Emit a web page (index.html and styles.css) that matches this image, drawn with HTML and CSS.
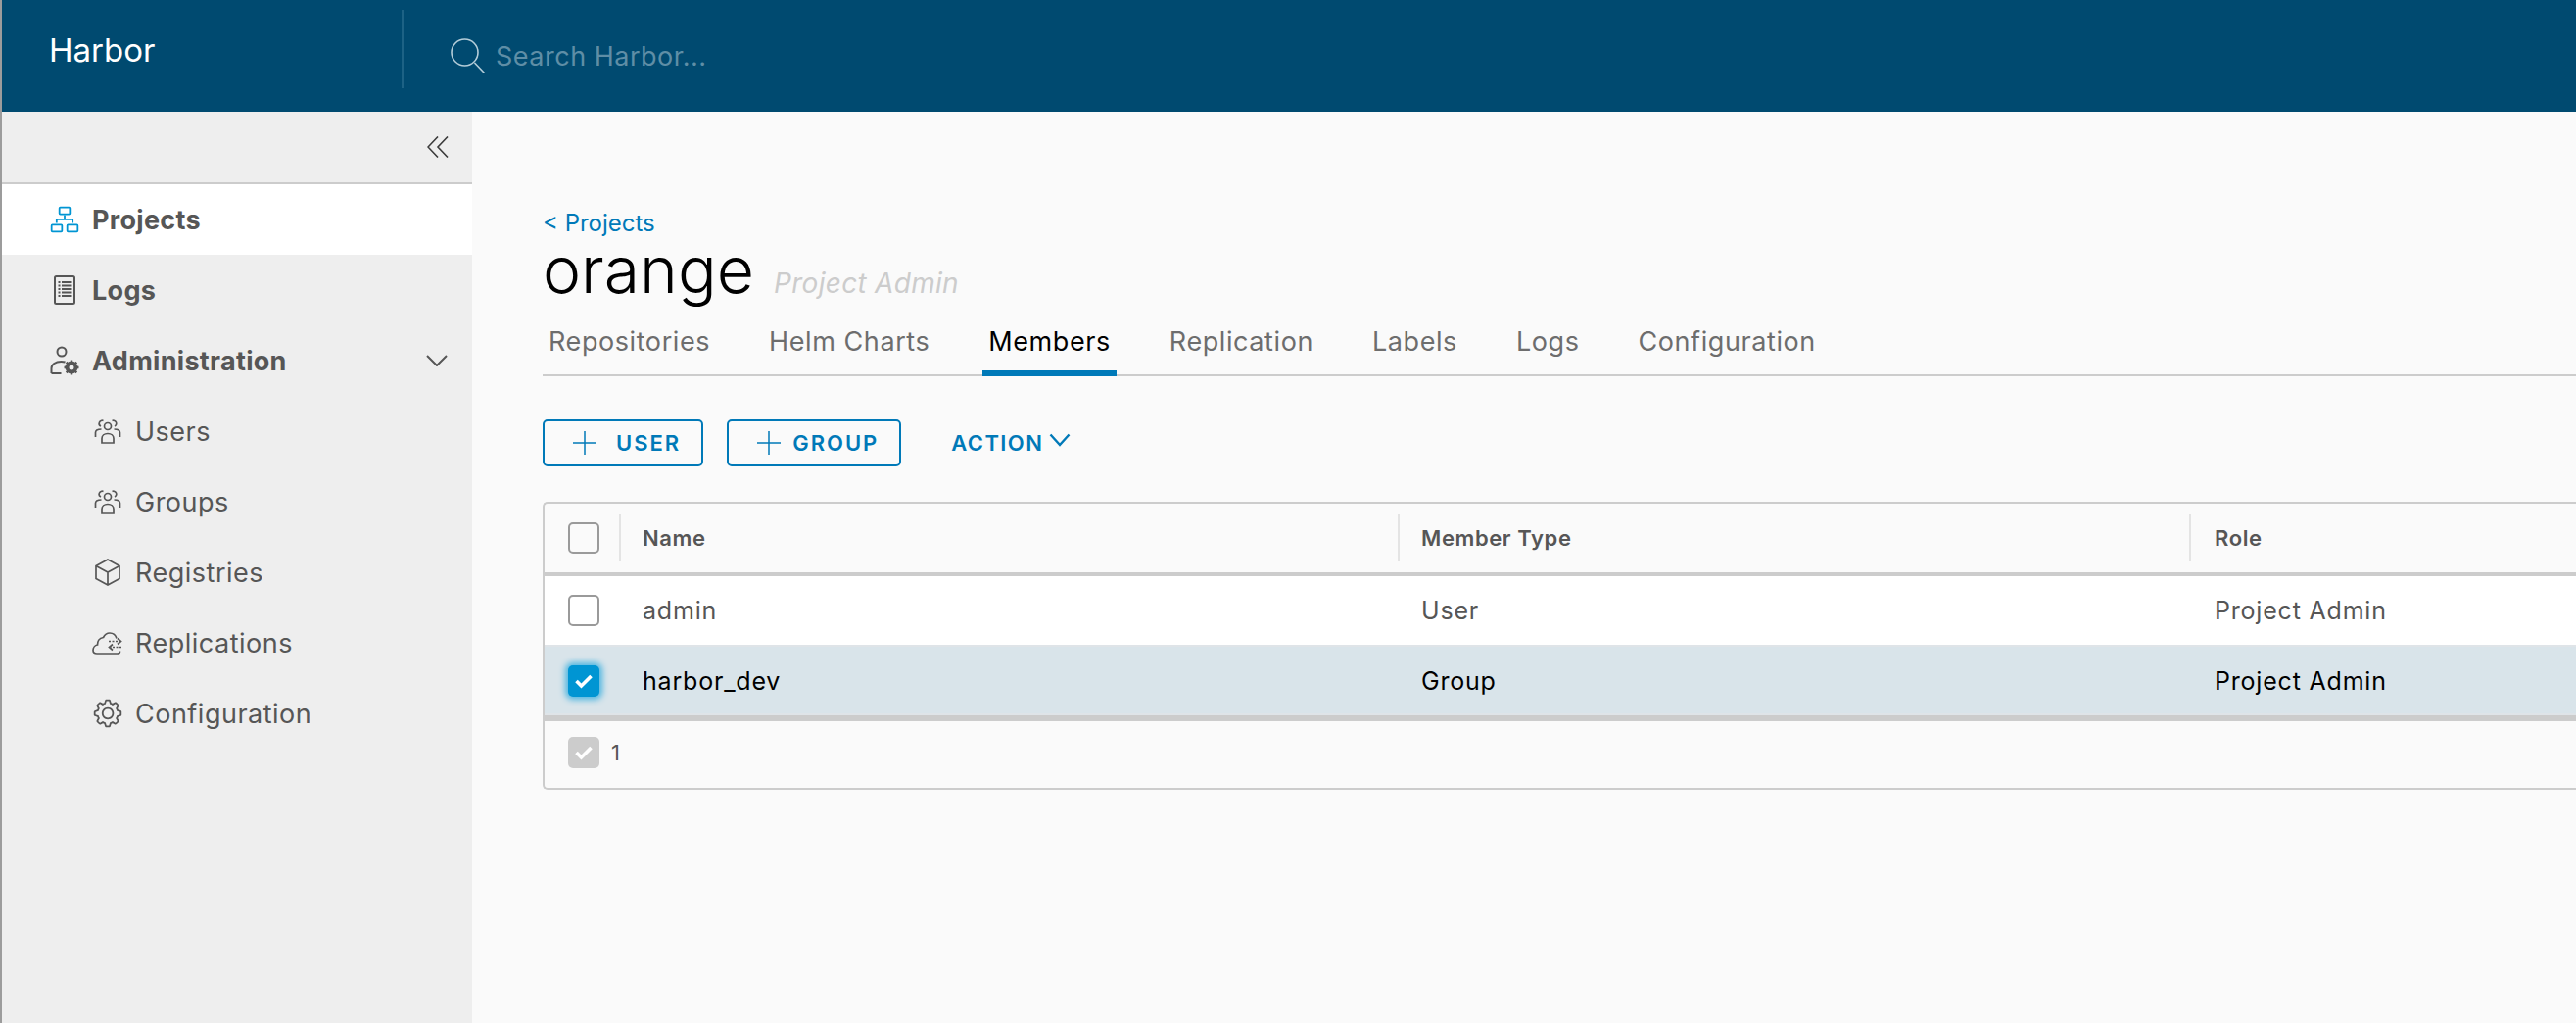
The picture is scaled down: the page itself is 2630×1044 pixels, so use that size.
FILE: index.html
```html
<!DOCTYPE html>
<html lang="en">
<head>
    <meta charset="UTF-8">
    <title>Harbor</title>
    <link rel="stylesheet" href="styles.css">
</head>
<body>
    <header class="topbar">
        <div class="brand">Harbor</div>
        <div class="search">
            <svg class="search-icon" viewBox="0 0 36 36"><circle cx="14.5" cy="14.5" r="13.5"/><path d="M24.500 25l10.500 11"/></svg>
            <span>Search Harbor...</span>
        </div>
    </header>

    <div class="layout">
        <nav class="sidebar">
            <div class="collapse-row">
                <svg class="chev-double" viewBox="0 0 22 22"><path d="M11 .5L1 11l10 10.500M21 .5L11 11l10 10.500"/></svg>
            </div>
            <a class="nav-item nav-top active">
                <svg class="icon" viewBox="0 0 36 36"><path d="M9.800 18.800H26.200v3.080h2V16.800H19V13H17v3.800H7.800v5.080h2Z"/><path d="M14 23H4a2 2 0 0 0-2 2v6a2 2 0 0 0 2 2H14a2 2 0 0 0 2-2V25A2 2 0 0 0 14 23ZM4 31V25H14v6Z"/><path d="M32 23H22a2 2 0 0 0-2 2v6a2 2 0 0 0 2 2H32a2 2 0 0 0 2-2V25A2 2 0 0 0 32 23ZM22 31V25H32v6Z"/><path d="M13 13H23a2 2 0 0 0 2-2V5a2 2 0 0 0-2-2H13a2 2 0 0 0-2 2v6A2 2 0 0 0 13 13Zm0-8H23v6H13Z"/></svg>
                Projects
            </a>
            <a class="nav-item nav-top">
                <svg class="icon line" viewBox="0 0 32 32"><rect x="6" y="2" width="20" height="28" rx="1.500" stroke-width="2"/><path d="M9.500 8h2M13 8h9.500M9.500 11.500h2M13 11.500h9.500M9.500 15h2M13 15h9.500M9.500 18.500h2M13 18.500h9.500M9.500 22h2M13 22h9.500" stroke-width="1.800"/></svg>
                Logs
            </a>
            <a class="nav-item nav-top">
                <svg class="icon line" viewBox="0 0 32 32"><circle cx="13" cy="7" r="4.500" stroke-width="2"/><path d="M2.500 29v-5c0-4 4-7 10-7 1.500 0 3 .2 4 .5M2.500 29h10" stroke-width="2"/><circle cx="23" cy="23" r="4.500" stroke-width="4"/><path d="M23 15.500v15M15.500 23h15M17.700 17.700l10.600 10.600M28.300 17.700L17.700 28.300" stroke-width="2.400" stroke-dasharray="2.200 10.600"/></svg>
                Administration
                <svg class="chev-down" viewBox="0 0 22 12"><path d="M1 1l10 10L21 1"/></svg>
            </a>
            <a class="nav-item nav-sub">
                <svg class="icon line" viewBox="0 0 32 32"><circle cx="16" cy="11" r="3.500"/><path d="M10 28v-4.500c0-3 2.500-5 6-5s6 2 6 5V28Z"/><path d="M11.500 5.500A3 3 0 1 0 9 11M20.500 5.500A3 3 0 1 1 23 11M3.500 22v-4.500c0-2 2.500-3.500 6-3.500M28.500 22v-4.500c0-2-2.500-3.500-6-3.500"/></svg>
                Users
            </a>
            <a class="nav-item nav-sub">
                <svg class="icon line" viewBox="0 0 32 32"><circle cx="16" cy="11" r="3.500"/><path d="M10 28v-4.500c0-3 2.500-5 6-5s6 2 6 5V28Z"/><path d="M11.500 5.500A3 3 0 1 0 9 11M20.500 5.500A3 3 0 1 1 23 11M3.500 22v-4.500c0-2 2.500-3.500 6-3.500M28.500 22v-4.500c0-2-2.500-3.500-6-3.500"/></svg>
                Groups
            </a>
            <a class="nav-item nav-sub">
                <svg class="icon line" viewBox="0 0 32 32"><path d="M16 3l12 6.500v13L16 29 4 22.500v-13ZM4 9.500L16 16l12-6.500M16 16v13"/></svg>
                Registries
            </a>
            <a class="nav-item nav-sub">
                <svg class="icon line" viewBox="0 0 32 32"><path d="M25 11.500C24 8 21 6 18 6c-3 0-5 1.500-6.500 4.500C7 11 5.500 15 5.500 18 3 18.500 1 21 1 23.500 1 26 3 27 5 27h21c1.500 0 2.500-1 2.500-2.500"/><path d="M17 14.500h11" stroke-dasharray="2 1.500"/><path d="M26 11.500l3.500 3-3.500 3"/><path d="M30 20.500H19" stroke-dasharray="2 1.500"/><path d="M21 17.500l-3.500 3 3.500 3"/></svg>
                Replications
            </a>
            <a class="nav-item nav-sub">
                <svg class="icon" viewBox="0 0 36 36"><path d="M18.100 11c-3.900 0-7 3.100-7 7s3.100 7 7 7c3.900 0 7-3.100 7-7S22 11 18.100 11zM18.100 23c-2.800 0-5-2.200-5-5s2.200-5 5-5c2.800 0 5 2.200 5 5S20.900 23 18.100 23z"/><path d="M32.800 14.700L30 13.800l-.6-1.500 1.400-2.600c.3-.6.2-1.400-.3-1.900l-2.400-2.400c-.5-.5-1.300-.6-1.900-.3l-2.600 1.400-1.500-.6-.9-2.800C21 2.500 20.400 2 19.700 2h-3.400c-.7 0-1.300.5-1.400 1.200L14 6c-.6.100-1.100.3-1.600.6L9.800 5.200C9.200 4.900 8.400 5 7.900 5.500L5.500 7.900C5 8.400 4.900 9.200 5.200 9.800l1.300 2.500c-.2.500-.4 1.100-.6 1.600l-2.800.9C2.500 15 2 15.600 2 16.300v3.400c0 .7.500 1.300 1.200 1.500L6 22.100l.6 1.500-1.400 2.600c-.3.6-.2 1.400.3 1.900l2.400 2.400c.5.5 1.300.6 1.900.3l2.600-1.400 1.500.6.9 2.900c.2.600.8 1.100 1.500 1.100h3.400c.7 0 1.300-.5 1.500-1.100l.9-2.900 1.500-.6 2.600 1.400c.6.3 1.400.2 1.900-.3l2.400-2.400c.5-.5.600-1.300.3-1.900l-1.400-2.600.6-1.500 2.900-.9c.6-.2 1.100-.8 1.100-1.500v-3.400C34 15.600 33.500 14.900 32.800 14.700zM32 19.400l-3.600 1.100-.1.500c-.3.7-.6 1.400-.9 2.100l-.3.5 1.800 3.300-2 2-3.300-1.800-.5.3c-.7.4-1.400.7-2.100.9l-.5.1L19.400 32h-2.800l-1.100-3.600-.5-.1c-.7-.3-1.400-.6-2.100-.9l-.5-.3-3.300 1.800-2-2 1.800-3.300-.3-.5c-.4-.7-.7-1.400-.9-2.100l-.1-.5L4 19.400v-2.800l3.400-1 .2-.5c.2-.8.5-1.500.9-2.200l.3-.5L7.100 9.100l2-2 3.200 1.800.5-.3c.7-.4 1.400-.7 2.200-.9l.5-.2L16.600 4h2.800l1.100 3.500.5.2c.7.2 1.400.5 2.100.9l.5.3 3.300-1.800 2 2-1.800 3.300.3.5c.4.7.7 1.400.9 2.100l.1.500 3.600 1.100V19.400z"/></svg>
                Configuration
            </a>
        </nav>

        <main class="content">
            <a class="back-link">&lt; Projects</a>
            <div class="title-row">
                <h1>orange</h1>
                <span class="role-tag">Project Admin</span>
            </div>
            <div class="tabs">
                <a class="tab">Repositories</a>
                <a class="tab">Helm Charts</a>
                <a class="tab current">Members</a>
                <a class="tab">Replication</a>
                <a class="tab">Labels</a>
                <a class="tab">Logs</a>
                <a class="tab">Configuration</a>
            </div>
            <div class="actions">
                <button class="btn"><svg class="plus" viewBox="0 0 24 24"><path d="M12 0v24M0 12h24"/></svg>USER</button>
                <button class="btn btn-group"><svg class="plus" viewBox="0 0 24 24"><path d="M12 0v24M0 12h24"/></svg>GROUP</button>
                <button class="btn-link">ACTION<svg class="chev-action" viewBox="0 0 22 14"><path d="M1.500 1.500L11 12l9.500-10.500"/></svg></button>
            </div>

            <div class="grid">
                <div class="row head">
                    <div class="cell-check"><span class="check"></span></div>
                    <div class="col-name">Name</div>
                    <div class="col-type">Member Type</div>
                    <div class="col-role">Role</div>
                </div>
                <div class="row body-row">
                    <div class="cell-check"><span class="check"></span></div>
                    <div class="col-name">admin</div>
                    <div class="col-type">User</div>
                    <div class="col-role">Project Admin</div>
                </div>
                <div class="row body-row selected">
                    <div class="cell-check"><span class="check on"><svg viewBox="0 0 20 16"><path d="M2.500 8l5 5L17.500 3"/></svg></span></div>
                    <div class="col-name">harbor_dev</div>
                    <div class="col-type">Group</div>
                    <div class="col-role">Project Admin</div>
                </div>
                <div class="grid-foot">
                    <span class="check off"><svg viewBox="0 0 20 16"><path d="M2.500 8l5 5L17.500 3"/></svg></span>
                    <span class="count">1</span>
                </div>
            </div>
        </main>
    </div>
</body>
</html>
```

FILE: styles.css
```css
* {
    box-sizing: border-box;
}

body {
    margin: 0;
    height: 1044px;
    overflow: hidden;
    display: flex;
    flex-direction: column;
    border-left: 2px solid #9c9c9c;
    font-family: Inter, "Open Sans", sans-serif;
    color: #565656;
    background-color: #fafafa;
}

svg {
    display: block;
    flex: none;
}

/* top bar */
.topbar {
    height: 114px;
    flex: none;
    display: flex;
    align-items: center;
    background-color: #004a70;
}

.brand {
    width: 410px;
    height: 80px;
    margin-top: -14px;
    padding-left: 48px;
    padding-top: 2px;
    display: flex;
    align-items: center;
    border-right: 2px solid #1d6285;
    font-size: 33px;
    color: #fff;
}

.search {
    display: flex;
    align-items: center;
    margin-left: 48px;
    font-size: 27px;
    letter-spacing: .5px;
    color: #5f8ea6;
}

.search-icon {
    width: 36px;
    height: 36px;
    margin-right: 10px;
    fill: none;
    stroke: #b4cdd9;
    stroke-width: 1.6;
}

/* side nav */
.layout {
    flex: 1;
    display: flex;
    min-height: 0;
}

.sidebar {
    width: 480px;
    flex: none;
    background-color: #eee;
}

.collapse-row {
    height: 74px;
    display: flex;
    align-items: center;
    justify-content: flex-end;
    padding-right: 24px;
    border-bottom: 2px solid #ccc;
}

.chev-double {
    width: 22px;
    height: 22px;
    fill: none;
    stroke: #3c3c3c;
    stroke-width: 1.6;
}

.nav-item {
    height: 72px;
    display: flex;
    align-items: center;
    font-size: 27px;
    letter-spacing: .5px;
}

.nav-top {
    padding-left: 48px;
    gap: 12px;
    font-weight: 700;
    letter-spacing: .3px;
}

.nav-sub {
    padding-left: 92px;
    gap: 12px;
}

.nav-item.active {
    background-color: #fff;
}

.icon {
    width: 32px;
    height: 32px;
    fill: #565656;
}

.active .icon {
    fill: #0095d3;
}

.icon.line {
    fill: none;
    stroke: #565656;
    stroke-width: 1.7;
}

.chev-down {
    width: 22px;
    height: 12px;
    margin-left: auto;
    margin-right: 25px;
    fill: none;
    stroke: #565656;
    stroke-width: 2;
}

/* main area */
.content {
    flex: 1;
    min-width: 0;
    padding-top: 96px;
    padding-left: 72px;
}

.back-link {
    display: block;
    height: 32px;
    margin-top: 2px;
    line-height: 32px;
    font-size: 24px;
    color: #0079b8;
}

.title-row {
    display: flex;
    align-items: baseline;
    height: 60px;
    margin-top: 1px;
    margin-bottom: 7px;
    line-height: 60px;
}

h1 {
    margin: 0 20px 0 0;
    font-size: 66px;
    font-weight: 300;
    color: #000;
}

.role-tag {
    font-size: 28px;
    font-style: italic;
    letter-spacing: .3px;
    color: #ccc;
}

.tabs {
    display: flex;
    height: 72px;
    border-bottom: 2px solid #ccc;
    gap: 48px;
}

.tab {
    height: 72px;
    padding: 0 6px;
    line-height: 74px;
    font-size: 27px;
    letter-spacing: .58px;
    color: #6d6d6d;
}

.tab.current {
    color: #000;
    border-bottom: 6px solid #0079b8;
}

.actions {
    display: flex;
    align-items: center;
    margin-top: 44px;
    gap: 24px;
}

.btn, .btn-link {
    height: 48px;
    display: flex;
    align-items: center;
    background: none;
    font-family: inherit;
    font-size: 22px;
    font-weight: 600;
    letter-spacing: 2px;
    color: #0079b8;
}

.btn {
    padding: 0 21px 0 29px;
    border: 2px solid #0079b8;
    border-radius: 5px;
}

.plus {
    width: 24px;
    height: 24px;
    margin-right: 20px;
    fill: none;
    stroke: #0079b8;
    stroke-width: 1.5;
}

.btn-group .plus {
    margin-right: 12px;
}

.btn-link {
    padding: 0;
    margin-left: 27px;
    border: none;
    letter-spacing: 1.4px;
}

.chev-action {
    width: 22px;
    height: 14px;
    margin-left: 6px;
    margin-top: -6px;
    fill: none;
    stroke: #0079b8;
    stroke-width: 2.4;
}

/* table */
.grid {
    margin-top: 36px;
    border: 2px solid #ccc;
    border-right: none;
    border-radius: 5px 0 0 5px;
}

.row {
    display: flex;
    align-items: center;
    font-size: 25px;
    letter-spacing: .8px;
}

.head {
    height: 74px;
    border-bottom: 4px solid #ccc;
    font-size: 22px;
    font-weight: 600;
    letter-spacing: .6px;
}

.body-row {
    height: 70px;
    background-color: #fff;
}

.selected {
    height: 78px;
    padding-top: 2px;
    color: #000;
    background-color: #d9e4ea;
    border-bottom: 6px solid #ccc;
    box-shadow: inset 0 2px 0 #dfe4e8, inset 0 -2px 0 #dfe4e8;
}

.cell-check {
    width: 100px;
    flex: none;
    padding-left: 24px;
}

.col-name {
    width: 795px;
    flex: none;
}

.col-type {
    width: 810px;
    flex: none;
}

.col-role {
    flex: 1;
}

.head .cell-check,
.head .col-type,
.head .col-role {
    height: 48px;
    display: flex;
    align-items: center;
}

.head .cell-check {
    width: 78px;
    border-right: 2px solid #e4e4e4;
}

.head .col-name {
    width: 793px;
    padding-left: 22px;
}

.head .col-type {
    width: 808px;
    padding-left: 22px;
    border-left: 2px solid #e4e4e4;
}

.head .col-role {
    padding-left: 24px;
    border-left: 2px solid #e4e4e4;
}

.check {
    display: flex;
    align-items: center;
    justify-content: center;
    width: 32px;
    height: 32px;
    border: 2px solid #9a9a9a;
    border-radius: 5px;
    background-color: #fff;
}

.head .check {
    background-color: transparent;
}

.check svg {
    width: 20px;
    height: 16px;
    fill: none;
    stroke: #fff;
    stroke-width: 3.6;
}

.check.on {
    border: none;
    background-color: #0095d3;
    box-shadow: 0 0 6px 3px #4fb6e0;
}

.check.off {
    border: none;
    background-color: #ccc;
}

.grid-foot {
    height: 68px;
    display: flex;
    align-items: center;
    padding: 0 0 4px 24px;
    gap: 12px;
    font-size: 22px;
}
```
